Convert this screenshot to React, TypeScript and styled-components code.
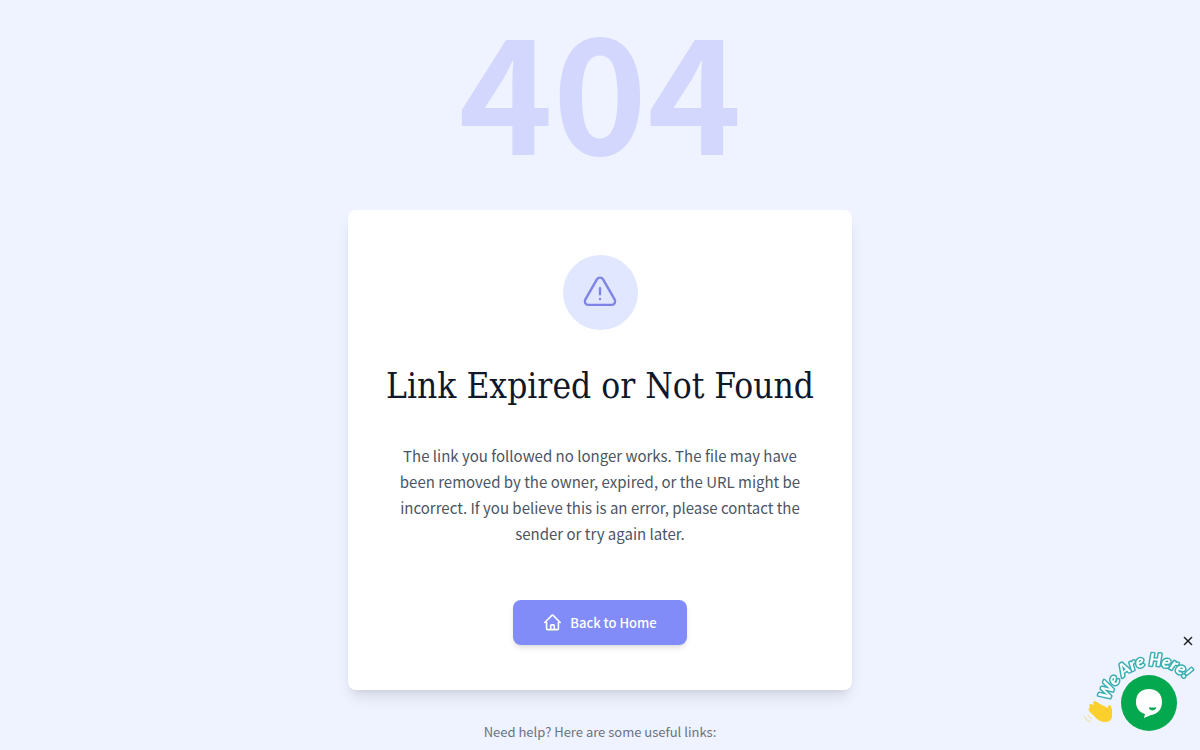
import React from 'react';
import styled, { createGlobalStyle } from 'styled-components';
import { HiOutlineExclamationTriangle, HiOutlineHome, HiXMark } from 'react-icons/hi2';

const GlobalStyle = createGlobalStyle`
  *, *::before, *::after { box-sizing: border-box; }
  body {
    margin: 0;
    background: #eff3ff;
    color: #4b5563;
    font-family: "Noto Sans CJK SC", "Noto Sans", sans-serif;
    font-size: 15px;
  }
`;

const Page = styled.main`
  display: flex;
  flex-direction: column;
  align-items: center;
  text-align: center;
`;

const Code = styled.p`
  margin: 0 0 40px;
  color: #d3d7fd;
  font-size: 160px;
  font-weight: 700;
  line-height: 170px;
`;

const Card = styled.section`
  display: flex;
  flex-direction: column;
  align-items: center;
  width: 100%;
  max-width: 504px;
  padding: 45px 36px;
  border-radius: 8px;
  background: #fff;
  box-shadow: 0 10px 15px -3px rgb(0 0 0 / 10%), 0 4px 6px -4px rgb(0 0 0 / 10%);
`;

const Badge = styled.div`
  display: grid;
  place-items: center;
  width: 75px;
  height: 75px;
  border-radius: 50%;
  background: #e0e7ff;
  color: #7f83e6;
`;

const Title = styled.h1`
  margin: 31px 0 0;
  color: #0f172a;
  font-family: "DejaVu Serif Condensed", "DejaVu Serif", serif;
  font-size: 35px;
  font-weight: 400;
  line-height: 50px;
  white-space: nowrap;
`;

const Message = styled.p`
  max-width: 414px;
  margin: 32px 0 0;
  line-height: 26px;
`;

const HomeButton = styled.button`
  display: flex;
  align-items: center;
  gap: 8px;
  height: 45px;
  margin-top: 53px;
  padding: 0 30px;
  border: 0;
  border-radius: 8px;
  background: #818cf8;
  color: #fff;
  font: inherit;
  font-size: 13px;
  font-weight: 500;
  cursor: pointer;
  box-shadow: 0 4px 6px -1px rgb(0 0 0 / 10%), 0 2px 4px -2px rgb(0 0 0 / 10%);
`;

const Help = styled.p`
  margin: 30px 0 0;
  color: #6b7280;
  font-size: 13px;
  line-height: 24px;
`;

const ChatWidget = styled.aside`
  position: fixed;
  right: 0;
  bottom: 0;
  width: 120px;
  height: 120px;
`;

const Greeting = styled.svg`
  display: block;
  width: 120px;
  height: 120px;
`;

const GreetingText = styled.text`
  font-family: Lato, sans-serif;
  font-size: 17px;
  font-weight: 900;
  font-style: italic;
  fill: #fff;
  stroke: #3aaeb3;
  stroke-width: 3px;
  stroke-linejoin: round;
  paint-order: stroke;
`;

const CloseButton = styled.button`
  position: absolute;
  top: 3px;
  right: 4px;
  display: grid;
  place-items: center;
  width: 16px;
  height: 16px;
  padding: 0;
  border: 0;
  background: none;
  color: #000;
  cursor: pointer;
`;

const ChatButton = styled.button`
  position: absolute;
  right: 23px;
  bottom: 19px;
  width: 56px;
  height: 56px;
  padding: 0;
  border: 0;
  border-radius: 50%;
  background: #04a84e;
  cursor: pointer;
`;

export default function App() {
  return (
    <>
      <GlobalStyle />
      <Page>
        <Code>404</Code>
        <Card>
          <Badge>
            <HiOutlineExclamationTriangle size={38} aria-hidden />
          </Badge>
          <Title>Link Expired or Not Found</Title>
          <Message>
            The link you followed no longer works. The file may have been removed by the owner,
            expired, or the URL might be incorrect. If you believe this is an error, please contact
            the sender or try again later.
          </Message>
          <HomeButton type="button">
            <HiOutlineHome size={19} strokeWidth={2} aria-hidden />
            Back to Home
          </HomeButton>
        </Card>
        <Help>Need help? Here are some useful links:</Help>
      </Page>
      <ChatWidget aria-label="Chat">
        <Greeting viewBox="0 0 120 120">
          <defs>
            <path id="greeting-arc" d="M30 71 A44 44 0 0 1 112 59" />
          </defs>
          <GreetingText>
            <textPath href="#greeting-arc">We Are Here!</textPath>
          </GreetingText>
          <path
            d="M10 77 Q8 74 11 74 L14 75 Q12 71 15 71 L22 75 L28 78 Q28 73 31 76 Q33 81 32 87 Q31 92 25 92 Q19 92 14 86 L9 81 Q8 78 10 77 Z"
            fill="#fcd02c"
          />
          <path d="M4 86 Q6 91 11 92 M8 85 Q9 88 12 89" fill="none" stroke="#f3dc8c" />
        </Greeting>
        <CloseButton type="button" aria-label="Close">
          <HiXMark size={14} stroke="currentColor" strokeWidth={1} />
        </CloseButton>
        <ChatButton type="button" aria-label="Open chat">
          <svg width="56" height="56" viewBox="0 0 56 56" aria-hidden>
            <path d="M28 14 C36 14 41 19 41 27 C41 34 37 39 30 40 L23 43 L24 39 C18 37 15 33 15 27 C15 19 20 14 28 14 Z" fill="#fff" />
            <path d="M28 33 Q31 37 35 33 Z" fill="#04a84e" stroke="#04a84e" />
          </svg>
        </ChatButton>
      </ChatWidget>
    </>
  );
}
